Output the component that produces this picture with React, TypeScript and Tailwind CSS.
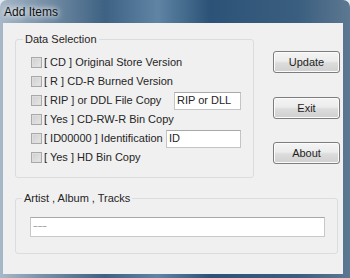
import React from "react";

const font = { fontFamily: '"Liberation Sans", Arial, sans-serif' };

function Check() {
  return (
    <span className="w-[11px] h-[11px] shrink-0 border border-[#a9a9a9] bg-[linear-gradient(135deg,#cfcfcf,#e6e6e6)] shadow-[inset_0_0_0_1px_#dedede] mr-[2px]" />
  );
}

function Row({ label, labelW, box, boxW }: { label: string; labelW?: string; box?: string; boxW?: string }) {
  return (
    <div className="h-[19px] flex items-center">
      <Check />
      <span className={`whitespace-nowrap shrink-0 ${labelW ?? ""}`}>{label}</span>
      {box !== undefined && (
        <div className={`h-[18px] ${boxW} bg-white border border-[#c4c4c4] border-t-[#a8a8a8] flex items-center pl-[2px] whitespace-nowrap`}>
          {box}
        </div>
      )}
    </div>
  );
}

function Btn({ children, className }: { children: React.ReactNode; className?: string }) {
  return (
    <div
      className={`w-[67px] h-[22px] rounded-[3px] border border-[#7d7d7d] bg-[linear-gradient(#f4f4f4,#ececec_45%,#dcdcdc_55%,#d0d0d0)] shadow-[inset_0_0_0_1px_#fbfbfb] flex items-center justify-center text-[11px] text-[#1e1e1e] ${className ?? ""}`}
    >
      {children}
    </div>
  );
}

export default function App() {
  return (
    <div className="w-[350px] h-[278px] bg-[#e4e9ee] overflow-hidden" style={font}>
      <div className="w-[350px] h-[278px] rounded-t-[7px] flex flex-col bg-[linear-gradient(90deg,#a7b8c8_0%,#7891a8_12%,#3e6283_30%,#5f84a4_45%,#2c5377_60%,#3a5e7f_85%,#5d7891_100%)]">
        <div className="h-[23px] shrink-0 flex items-center pl-[4px] text-[12px] text-[#111] [text-shadow:0_0_5px_#fff,0_0_8px_#fff]">
          Add Items
        </div>
        <div className="ml-[3px] mr-[7px] h-[251px] bg-[#f0f0f0] pl-[12px] text-[11px] text-[#252525] flex flex-col">
          <div className="flex">
            <fieldset className="mt-[10px] w-[239px] border border-[#d9dde0] rounded-[3px] pl-[15px] pt-[7px] pb-[10px]">
              <legend className="ml-[-8px] px-[2px] leading-[13px]">Data Selection</legend>
              <Row label="[ CD ] Original Store Version" />
              <Row label="[ R ] CD-R Burned Version" />
              <Row label="[ RIP ] or DDL File Copy" labelW="w-[130px]" box="RIP or DLL" boxW="w-[67px]" />
              <Row label="[ Yes ] CD-RW-R Bin Copy" />
              <Row label="[ ID00000 ] Identification" labelW="w-[122px]" box="ID" boxW="w-[75px]" />
              <Row label="[ Yes ] HD Bin Copy" />
            </fieldset>
            <div className="ml-[19px] mt-[28px] flex flex-col">
              <Btn>Update</Btn>
              <Btn className="mt-[24px]">Exit</Btn>
              <Btn className="mt-[23px]">About</Btn>
            </div>
          </div>
          <fieldset className="mt-[14px] w-[323px] border border-[#d9dde0] rounded-[3px] pl-[14px] pt-[12px] pb-[16px]">
            <legend className="ml-[-8px] px-[2px] leading-[13px]">Artist , Album , Tracks</legend>
            <div className="w-[295px] h-[20px] bg-white border border-[#c8c8c8] border-t-[#a8a8a8] flex items-center pl-[2px] text-[8px] text-[#666]">
              ~~~
            </div>
          </fieldset>
        </div>
      </div>
    </div>
  );
}
